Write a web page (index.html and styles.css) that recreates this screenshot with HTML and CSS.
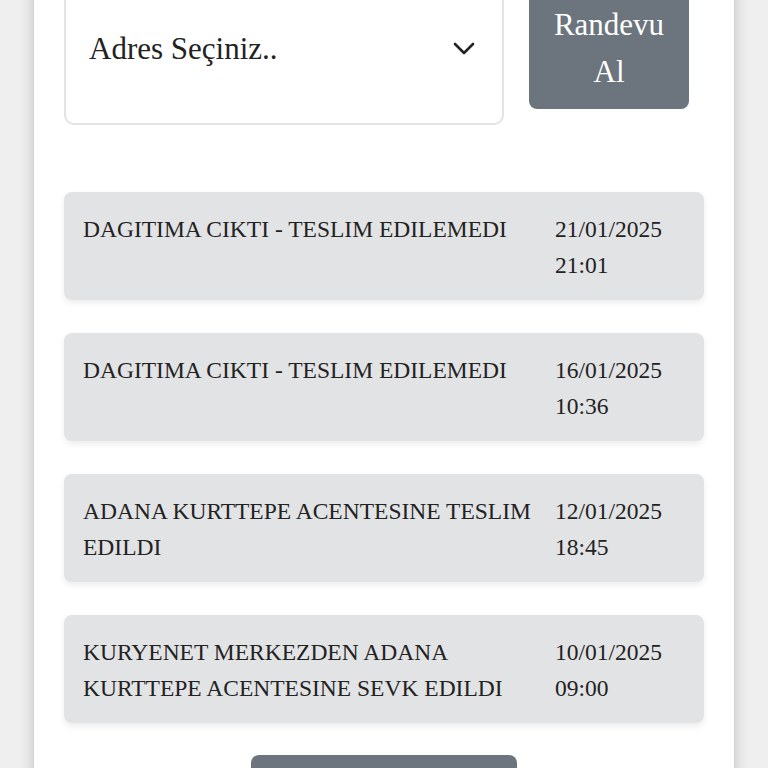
FILE: index.html
```html
<!DOCTYPE html>
<html lang="tr">
<head>
<meta charset="utf-8">
<link rel="stylesheet" href="styles.css">
</head>
<body>
<div class="page">
  <div class="card">
    <div class="top-row">
      <div class="select">
        <span class="select-text">Adres Seçiniz..</span>
        <svg class="chev" width="22" height="14" viewBox="0 0 22 14"><path d="M2 2 L11 11 L20 2" fill="none" stroke="#222" stroke-width="2.6" stroke-linecap="round" stroke-linejoin="round"/></svg>
      </div>
      <button class="btn btn-side">Randevu<br>Al</button>
    </div>
    <div class="list">
      <div class="item">
        <div class="desc">DAGITIMA CIKTI - TESLIM EDILEMEDI</div>
        <div class="date">21/01/2025<br>21:01</div>
      </div>
      <div class="item">
        <div class="desc">DAGITIMA CIKTI - TESLIM EDILEMEDI</div>
        <div class="date">16/01/2025<br>10:36</div>
      </div>
      <div class="item">
        <div class="desc">ADANA KURTTEPE ACENTESINE TESLIM EDILDI</div>
        <div class="date">12/01/2025<br>18:45</div>
      </div>
      <div class="item">
        <div class="desc">KURYENET MERKEZDEN ADANA KURTTEPE ACENTESINE SEVK EDILDI</div>
        <div class="date">10/01/2025<br>09:00</div>
      </div>
    </div>
    <div class="bottom">
      <button class="btn btn-bottom">&nbsp;</button>
    </div>
  </div>
</div>
</body>
</html>
```
FILE: styles.css
```css
html, body {
  margin: 0;
  padding: 0;
  background: #efefef;
  height: 768px;
  overflow: hidden;
}
.page {
  display: flex;
  justify-content: center;
  padding: 0 34px;
}
.card {
  background: #fff;
  width: 700px;
  box-shadow: 0 0 14px rgba(0,0,0,0.22);
  margin-top: -40px;
  padding: 0 30px 0 30px;
  box-sizing: border-box;
  font-family: "Liberation Serif", "Times New Roman", serif;
  color: #222;
}
.top-row {
  display: flex;
  align-items: flex-start;
  gap: 25px;
  padding-right: 15px;
}
.select {
  width: 440px;
  height: 165px;
  box-sizing: border-box;
  border: 2px solid #e4e4e4;
  border-radius: 10px;
  display: flex;
  align-items: center;
  justify-content: space-between;
  padding: 0 27px 0 23px;
}
.select-text {
  font-size: 31px;
  color: #222;
  position: relative;
  top: 6px;
}
.chev {
  display: block;
  position: relative;
  top: 6px;
}
.btn {
  background: #6c757d;
  color: #fff;
  border: none;
  border-radius: 8px;
  font-family: "Liberation Serif", "Times New Roman", serif;
}
.btn-side {
  width: 160px;
  height: 149px;
  font-size: 31px;
  line-height: 47px;
  padding: 26px 0 0 0;
  text-align: center;
}
.list {
  margin-top: 67px;
  display: flex;
  flex-direction: column;
  gap: 33px;
}
.item {
  background: #e2e3e5;
  border-radius: 8px;
  box-shadow: 0 3px 6px rgba(0,0,0,0.08);
  display: grid;
  grid-template-columns: 1fr 130px;
  column-gap: 20px;
  padding: 19px 19px 17px;
  min-height: 108px;
  box-sizing: border-box;
  font-size: 23.5px;
  line-height: 36px;
  color: #222;
}
.bottom {
  display: flex;
  justify-content: center;
  margin-top: 32px;
}
.btn-bottom {
  width: 266px;
  height: 50px;
}
```
